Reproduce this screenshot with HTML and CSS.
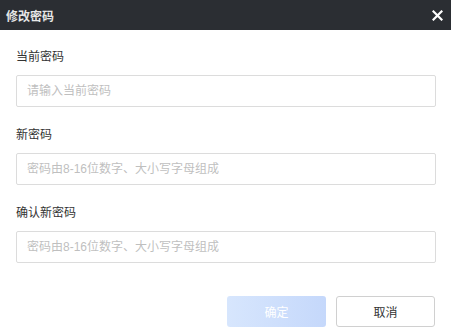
FILE: index.html
```html
<!DOCTYPE html>
<html lang="zh-CN">
<head>
    <meta charset="UTF-8">
    <meta name="viewport" content="width=device-width, initial-scale=1.0">
    <title>修改密码</title>
    <link rel="stylesheet" href="styles.css">
</head>
<body>
    <div class="dialog">
        <div class="dialog-header">
            <span class="dialog-title">修改密码</span>
            <span class="dialog-close">
                <svg width="11" height="11" viewBox="0 0 11 11">
                    <path d="M1.5 1.5 L9.5 9.5 M9.5 1.5 L1.5 9.5" stroke="#fff" stroke-width="2.2" stroke-linecap="square"/>
                </svg>
            </span>
        </div>
        <form class="dialog-body">
            <div class="field">
                <label>当前密码</label>
                <input type="password" placeholder="请输入当前密码">
            </div>
            <div class="field">
                <label>新密码</label>
                <input type="password" placeholder="密码由8-16位数字、大小写字母组成">
            </div>
            <div class="field">
                <label>确认新密码</label>
                <input type="password" placeholder="密码由8-16位数字、大小写字母组成">
            </div>
            <div class="actions">
                <button type="button" class="btn btn-primary" disabled>确定</button>
                <button type="button" class="btn btn-default">取消</button>
            </div>
        </form>
    </div>
</body>
</html>
```

FILE: styles.css
```css
body {
    margin: 0;
    font-family: "Liberation Sans", "Noto Sans CJK SC", sans-serif;
    font-size: 12px;
    background: #fff;
}
.dialog {
    width: 451px;
    height: 334px;
    background: #fff;
}
.dialog-header {
    height: 30px;
    background: #2b2e33;
    display: flex;
    align-items: center;
    justify-content: space-between;
    padding: 0 8px 0 6px;
}
.dialog-title {
    color: #e6e6e6;
    font-size: 12px;
    font-weight: bold;
}
.dialog-close {
    display: flex;
    align-items: center;
}
.dialog-body {
    padding: 18px 15px 0 16px;
}
.field {
    margin-bottom: 19px;
}
.field label {
    display: block;
    height: 18px;
    line-height: 18px;
    color: #333;
    margin-bottom: 9px;
}
.field input {
    box-sizing: border-box;
    width: 100%;
    height: 32px;
    border: 1px solid #dcdcdc;
    border-radius: 2px;
    padding: 0 10px;
    font-family: inherit;
    font-size: 12px;
    outline: none;
}
.field input::placeholder {
    color: #bfbfbf;
}
.actions {
    display: flex;
    justify-content: flex-end;
    gap: 10px;
    margin-top: 33px;
    padding-right: 1px;
}
.btn {
    width: 99px;
    height: 31px;
    border-radius: 3px;
    font-family: inherit;
    font-size: 12px;
    cursor: pointer;
}
.btn-primary {
    border: none;
    color: #fff;
    background: linear-gradient(to right, #d7e6fd, #c5d8fb);
}
.btn-default {
    border: 1px solid #d0d0d0;
    background: #fff;
    color: #333;
}
```
